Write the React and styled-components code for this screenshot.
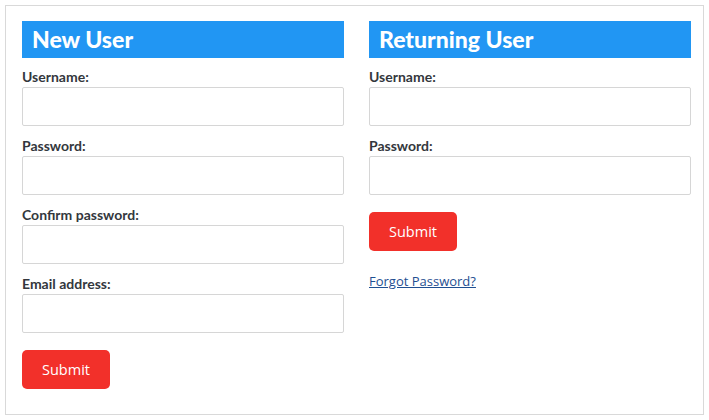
import React from "react";
import styled, { createGlobalStyle } from "styled-components";

const Global = createGlobalStyle`
  html, body { margin: 0; padding: 0; background: #fff; }
  body { font-family: Lato, "Open Sans", sans-serif; }
  * { box-sizing: border-box; }
`;

const Frame = styled.div`
  margin: 5px;
  width: 699px;
  height: 410px;
  border: 1px solid #d9d9d9;
  padding: 15px 12px 0 16px;
  display: grid;
  grid-template-columns: 322px 322px;
  column-gap: 25px;
  align-items: start;
`;

const Column = styled.section`
  display: flex;
  flex-direction: column;
`;

const Heading = styled.h2`
  margin: 0 0 11px;
  height: 37px;
  background: #2196f3;
  color: #fff;
  font-family: Lato, sans-serif;
  font-weight: 900;
  font-size: 23px;
  line-height: 37px;
  padding: 0 10px;
`;

const Field = styled.div`
  display: flex;
  flex-direction: column;
  margin-bottom: 12px;
`;

const Label = styled.label`
  font-family: Lato, sans-serif;
  font-weight: 700;
  font-size: 14px;
  line-height: 16px;
  color: #33373d;
  margin-bottom: 2px;
`;

const Input = styled.input`
  height: 39px;
  width: 100%;
  border: 1px solid #d6d6d6;
  border-radius: 2px;
  background: #fff;
  padding: 0 8px;
  font-size: 14px;
  outline: none;
`;

const Button = styled.button`
  align-self: flex-start;
  width: 88px;
  height: 39px;
  margin-top: 5px;
  border: none;
  border-radius: 5px;
  background: #f2302a;
  color: #fff;
  font-family: "Open Sans", sans-serif;
  font-size: 14.5px;
  cursor: pointer;
`;

const Link = styled.a`
  margin-top: 22px;
  font-family: "Open Sans", sans-serif;
  font-size: 13px;
  line-height: 16px;
  color: #1f4f91;
  text-decoration: underline;
  align-self: flex-start;
`;

const FormField = ({ label, type = "text" }) => (
  <Field>
    <Label>{label}</Label>
    <Input type={type} />
  </Field>
);

export default function App() {
  return (
    <>
      <Global />
      <Frame>
        <Column>
          <Heading>New User</Heading>
          <FormField label="Username:" />
          <FormField label="Password:" type="password" />
          <FormField label="Confirm password:" type="password" />
          <FormField label="Email address:" type="email" />
          <Button>Submit</Button>
        </Column>
        <Column>
          <Heading>Returning User</Heading>
          <FormField label="Username:" />
          <FormField label="Password:" type="password" />
          <Button>Submit</Button>
          <Link href="#">Forgot Password?</Link>
        </Column>
      </Frame>
    </>
  );
}
